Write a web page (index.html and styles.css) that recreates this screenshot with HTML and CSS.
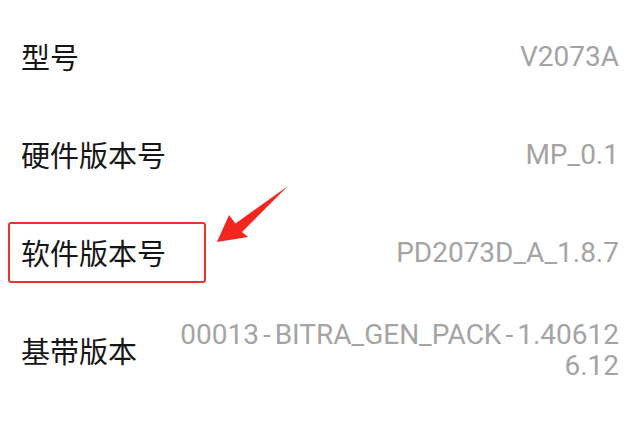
FILE: index.html
```html
<!DOCTYPE html>
<html lang="zh">
<head>
<meta charset="utf-8">
<link rel="stylesheet" href="styles.css">
</head>
<body>
<div class="page">
  <div class="list">
    <div class="row">
      <span class="label">型号</span>
      <span class="value">V2073A</span>
    </div>
    <div class="row">
      <span class="label">硬件版本号</span>
      <span class="value">MP_0.1</span>
    </div>
    <div class="row">
      <span class="label label-marked">软件版本号</span>
      <span class="value">PD2073D_A_1.8.7</span>
    </div>
    <div class="row">
      <span class="label">基带版本</span>
      <span class="value value-wrap">00013<span class="dash">-</span>BITRA_GEN_PACK<span class="dash">-</span>1.406126.12</span>
    </div>
  </div>
  <svg class="arrow" width="640" height="427" viewBox="0 0 640 427">
    <polygon points="217,242 229,215 235.5,223.5 288,186 242,232 248,237" fill="#f2261f"/>
  </svg>
</div>
</body>
</html>
```
FILE: styles.css
```css
html, body {
  margin: 0;
  padding: 0;
  background: #ffffff;
}
.page {
  position: relative;
  width: 640px;
  height: 427px;
  overflow: hidden;
}
.list {
  display: flex;
  flex-direction: column;
  padding: 7px 21px 0 21px;
}
.row {
  height: 98px;
  display: flex;
  align-items: center;
  justify-content: space-between;
}
.label {
  font-family: "Noto Sans CJK SC", "Noto Sans", sans-serif;
  font-size: 29px;
  color: #161616;
  white-space: nowrap;
  flex-shrink: 0;
}
.label-marked {
  margin-left: -13px;
  box-sizing: border-box;
  height: 61px;
  width: 198px;
  padding-left: 11px;
  border: 2.5px solid #ec322b;
  border-radius: 3px;
  display: flex;
  align-items: center;
}
.value {
  font-family: Roboto, "Liberation Sans", sans-serif;
  font-size: 28px;
  color: #a4a4a4;
  text-align: right;
  line-height: 31px;
}
.value-wrap {
  width: 445px;
  word-break: break-all;
}
.dash {
  margin: 0 4px;
}
.arrow {
  position: absolute;
  left: 0;
  top: 0;
  pointer-events: none;
}
```
